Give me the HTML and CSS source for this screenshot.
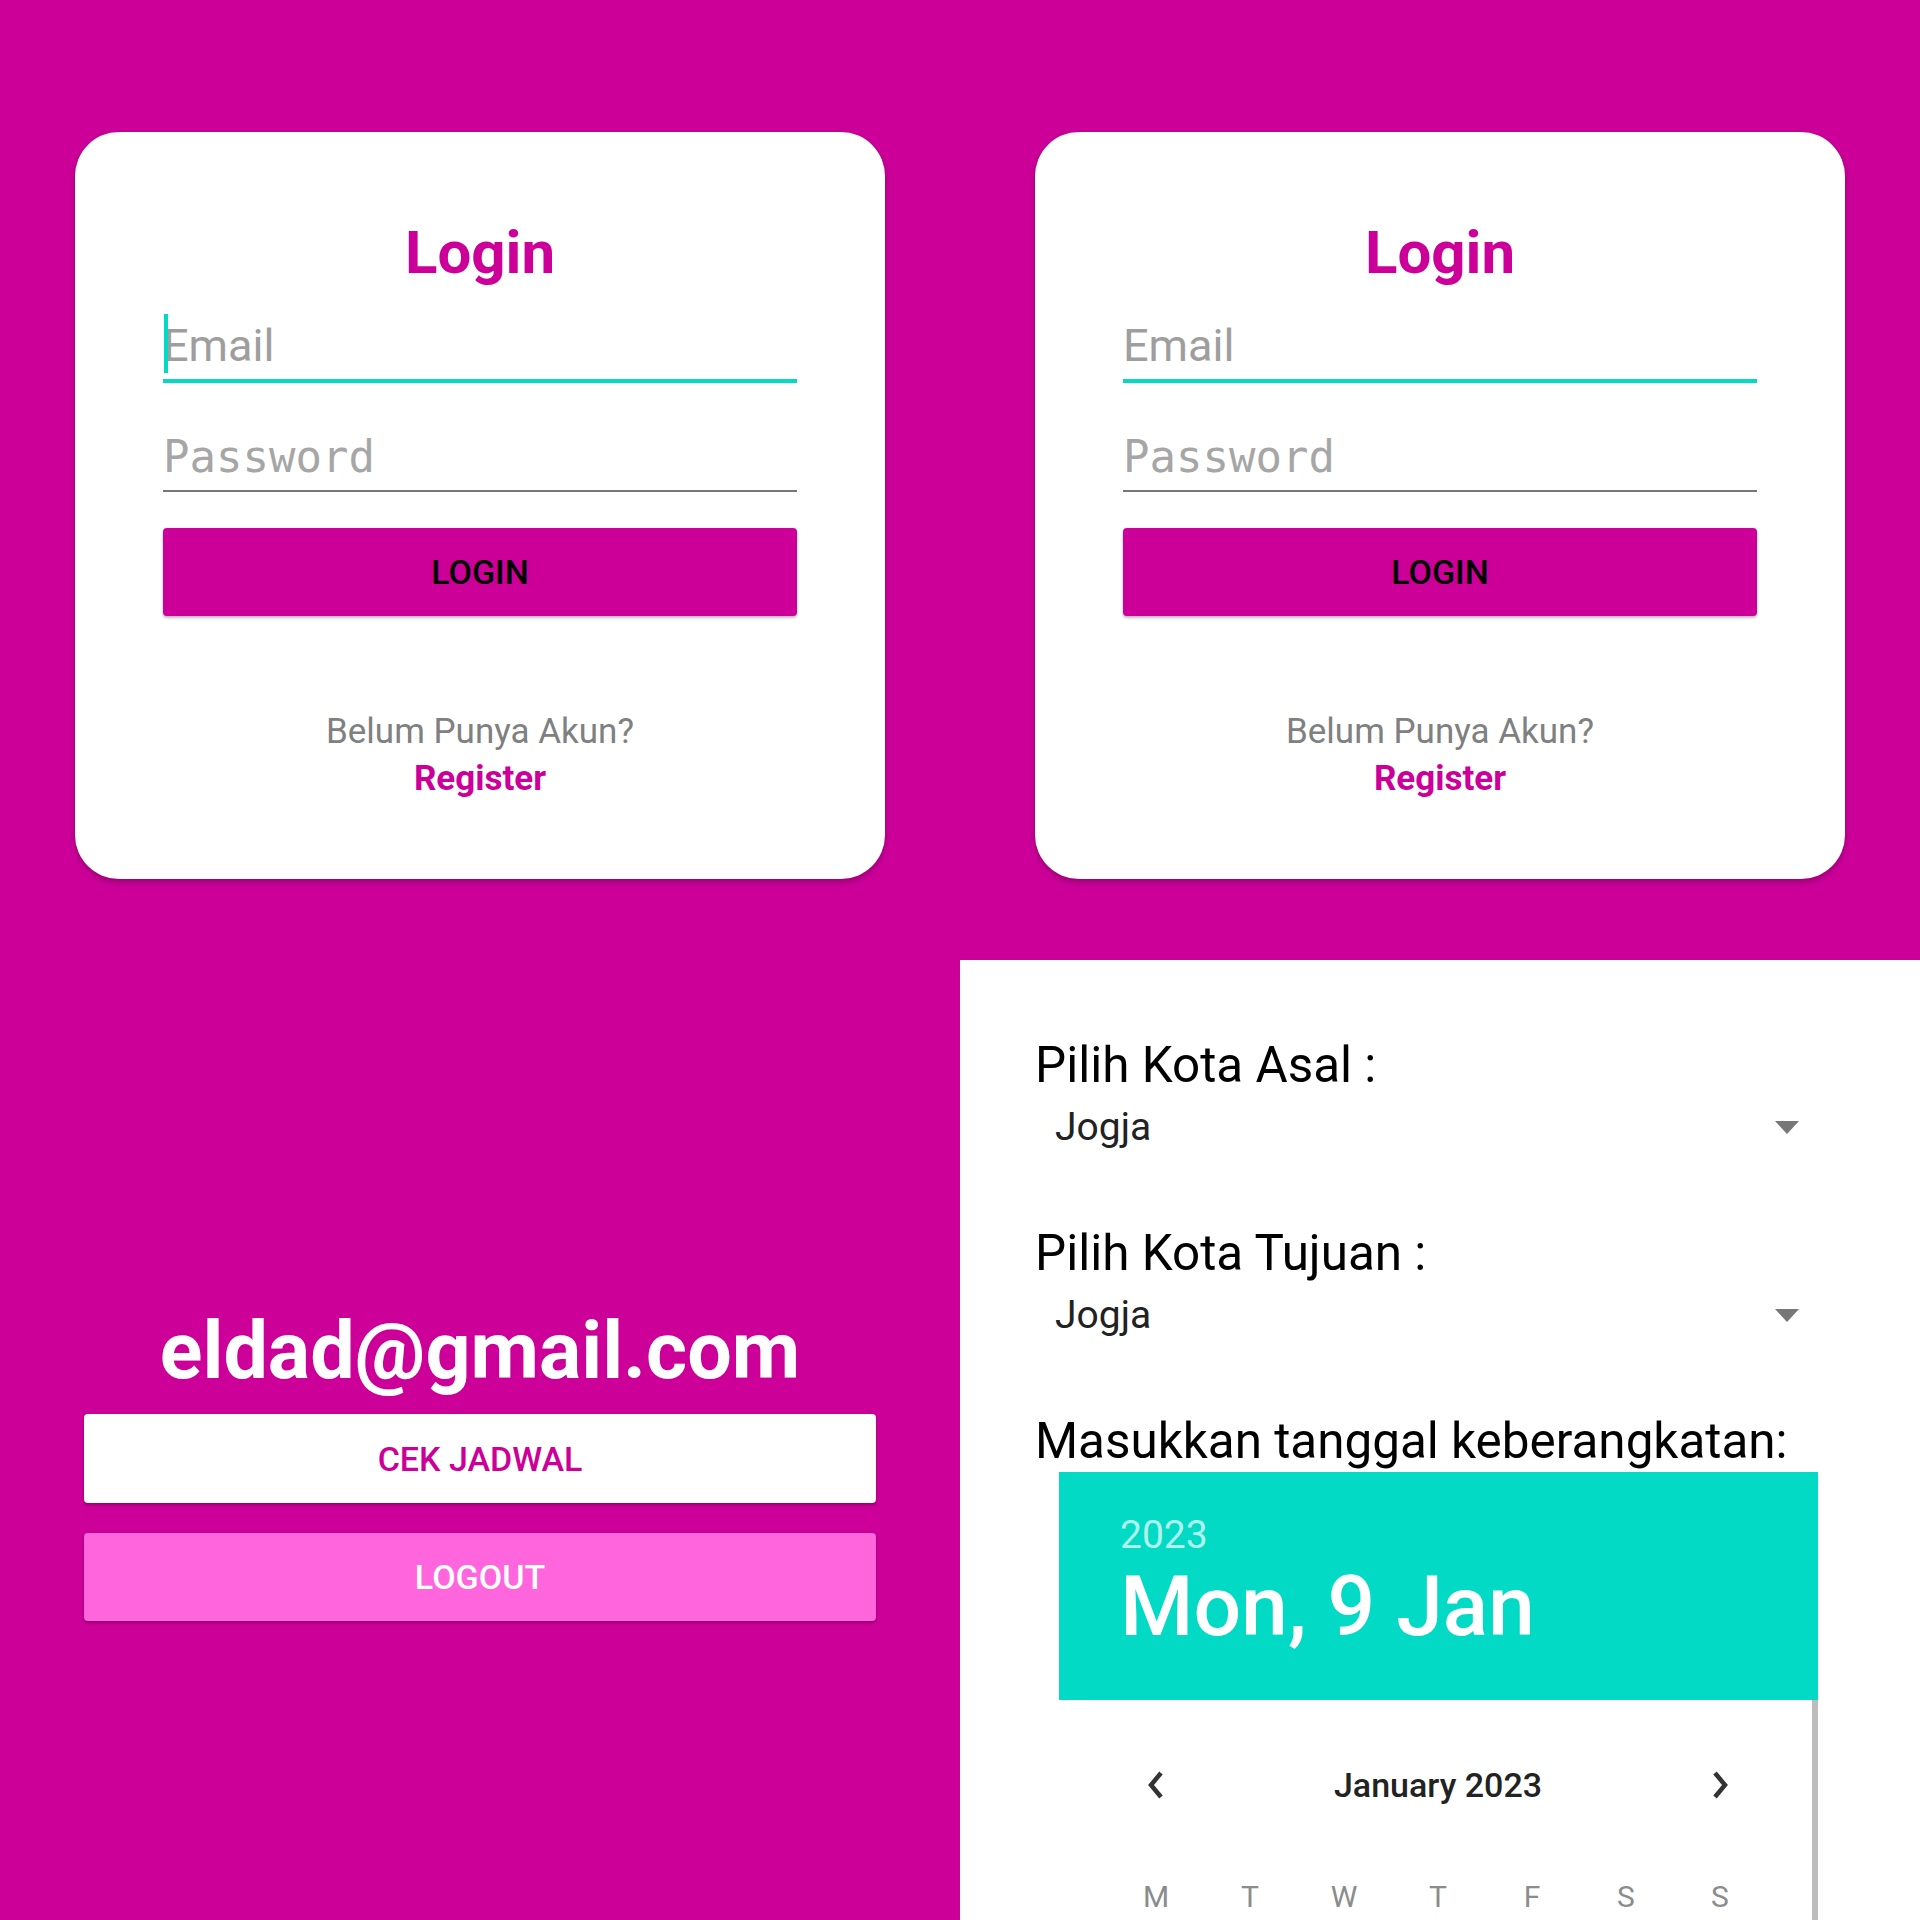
FILE: index.html
```html
<!DOCTYPE html>
<html lang="en">
<head>
    <meta charset="UTF-8">
    <meta name="viewport" content="width=device-width, initial-scale=1.0">
    <title>Travel App Screens</title>
    <link rel="stylesheet" href="styles.css">
</head>
<body>
    <div class="screens">
        <!-- login (focused) -->
        <div class="screen login-screen">
            <div class="card">
                <h2 class="title">Login</h2>
                <div class="field field-email">
                    <span class="caret"></span>
                    <span class="hint">Email</span>
                </div>
                <div class="field field-password">
                    <span class="hint">Password</span>
                </div>
                <div class="btn btn-login">LOGIN</div>
                <p class="ask">Belum Punya Akun?</p>
                <p class="link">Register</p>
            </div>
        </div>

        <!-- login -->
        <div class="screen login-screen">
            <div class="card">
                <h2 class="title">Login</h2>
                <div class="field field-email">
                    <span class="hint">Email</span>
                </div>
                <div class="field field-password">
                    <span class="hint">Password</span>
                </div>
                <div class="btn btn-login">LOGIN</div>
                <p class="ask">Belum Punya Akun?</p>
                <p class="link">Register</p>
            </div>
        </div>

        <!-- home -->
        <div class="screen home-screen">
            <h1 class="user">eldad@gmail.com</h1>
            <div class="btn btn-white">CEK JADWAL</div>
            <div class="btn btn-pink">LOGOUT</div>
        </div>

        <!-- jadwal -->
        <div class="screen form-screen">
            <p class="label">Pilih Kota Asal :</p>
            <div class="spinner">
                <span>Jogja</span>
                <svg width="24" height="13" viewBox="0 0 24 13"><path d="M0 0 H24 L12 13 Z" fill="#777"/></svg>
            </div>
            <p class="label label-gap">Pilih Kota Tujuan :</p>
            <div class="spinner">
                <span>Jogja</span>
                <svg width="24" height="13" viewBox="0 0 24 13"><path d="M0 0 H24 L12 13 Z" fill="#777"/></svg>
            </div>
            <p class="label label-gap">Masukkan tanggal keberangkatan:</p>
            <div class="picker">
                <div class="picker-head">
                    <div class="year">2023</div>
                    <div class="date">Mon, 9 Jan</div>
                </div>
                <div class="picker-body">
                    <div class="month-nav">
                        <span class="nav">
                            <svg width="20" height="30" viewBox="0 0 20 30"><polyline points="15,3 5,15 15,27" fill="none" stroke="#333" stroke-width="4.5"/></svg>
                        </span>
                        <span class="month">January 2023</span>
                        <span class="nav">
                            <svg width="20" height="30" viewBox="0 0 20 30"><polyline points="5,3 15,15 5,27" fill="none" stroke="#333" stroke-width="4.5"/></svg>
                        </span>
                    </div>
                    <div class="weekdays">
                        <span>M</span><span>T</span><span>W</span><span>T</span><span>F</span><span>S</span><span>S</span>
                    </div>
                </div>
            </div>
        </div>
    </div>
</body>
</html>
```

FILE: styles.css
```css
body {
    margin: 0;
    font-family: Roboto, "Liberation Sans", sans-serif;
    background-color: #cc0099;
}
.screens {
    display: grid;
    grid-template-columns: 960px 960px;
    grid-template-rows: 960px 960px;
    width: 1920px;
    height: 1920px;
}
.screen {
    box-sizing: border-box;
    overflow: hidden;
}

/* login cards */
.login-screen {
    padding: 132px 75px 0;
}
.card {
    box-sizing: border-box;
    height: 747px;
    background-color: white;
    border-radius: 44px;
    padding: 86px 88px 0;
    box-shadow: 0 3px 6px rgba(0,0,0,0.25);
    display: flex;
    flex-direction: column;
}
.title {
    margin: 0;
    font-size: 60px;
    line-height: 70px;
    font-weight: 700;
    color: #cc0099;
    text-align: center;
}
.field {
    position: relative;
}
.field-email {
    margin-top: 30px;
    font-size: 45px;
    line-height: 56px;
    padding-bottom: 5px;
    border-bottom: 4px solid #03dac5;
}
.field-password {
    margin-top: 48px;
    font-family: "DejaVu Sans Mono", "Liberation Mono", monospace;
    font-size: 44px;
    line-height: 52px;
    padding-bottom: 7px;
    border-bottom: 2px solid #777;
}
.hint {
    color: #9e9e9e;
}
.field-password .hint {
    color: #a6a6a6;
}
.caret {
    position: absolute;
    left: 1px;
    top: -4px;
    width: 4px;
    height: 59px;
    background-color: #03dac5;
}
.btn {
    display: flex;
    align-items: center;
    justify-content: center;
    border-radius: 4px;
    font-size: 34px;
    font-weight: 500;
    box-shadow: 0 2px 3px rgba(0,0,0,0.25), 0 0 2px rgba(0,0,0,0.1);
}
.btn-login {
    margin-top: 36px;
    height: 88px;
    background-color: #cc0099;
    color: #000;
}
.ask, .link {
    margin: 0;
    font-size: 35px;
    line-height: 47px;
    text-align: center;
}
.ask {
    margin-top: 92px;
    color: #808080;
}
.link {
    color: #cc0099;
    font-weight: 700;
}

/* home */
.home-screen {
    padding: 344px 84px 0;
    display: flex;
    flex-direction: column;
}
.user {
    margin: 0;
    font-size: 79px;
    line-height: 94px;
    font-weight: 700;
    color: white;
    text-align: center;
}
.btn-white {
    margin-top: 16px;
    height: 89px;
    background-color: white;
    color: #cc0099;
}
.btn-pink {
    margin-top: 30px;
    height: 88px;
    background-color: #ff66dd;
    color: white;
}

/* jadwal form */
.form-screen {
    background-color: white;
    padding: 76px 102px 0 75px;
}
.label {
    margin: 0;
    font-size: 49.4px;
    line-height: 59px;
    color: #000;
}
.label-gap {
    margin-top: 74px;
}
.spinner {
    margin-top: 9px;
    padding: 0 19px 0 20px;
    display: flex;
    align-items: center;
    justify-content: space-between;
    font-size: 39px;
    line-height: 46px;
    color: #222;
}
.picker {
    margin-left: 24px;
    margin-top: 1px;
}
.picker-head {
    box-sizing: border-box;
    height: 228px;
    background-color: #03dac5;
    padding: 40px 61px 0;
    color: white;
}
.year {
    font-size: 39px;
    line-height: 46px;
    color: rgba(255,255,255,0.7);
}
.date {
    font-size: 84px;
    line-height: 98px;
    font-weight: 500;
}
.picker-body {
    height: 400px;
    padding: 55px 45px 0 50px;
    border-right: 6px solid #bdbdbd;
}
.month-nav {
    display: flex;
    align-items: center;
    justify-content: space-between;
    height: 60px;
}
.nav {
    width: 94px;
    display: flex;
    justify-content: center;
}
.month {
    font-size: 34px;
    font-weight: 500;
    color: #222;
}
.weekdays {
    margin-top: 62px;
    display: grid;
    grid-template-columns: repeat(7, 94px);
    font-size: 30px;
    line-height: 40px;
    color: #8c8c8c;
    text-align: center;
}
```
